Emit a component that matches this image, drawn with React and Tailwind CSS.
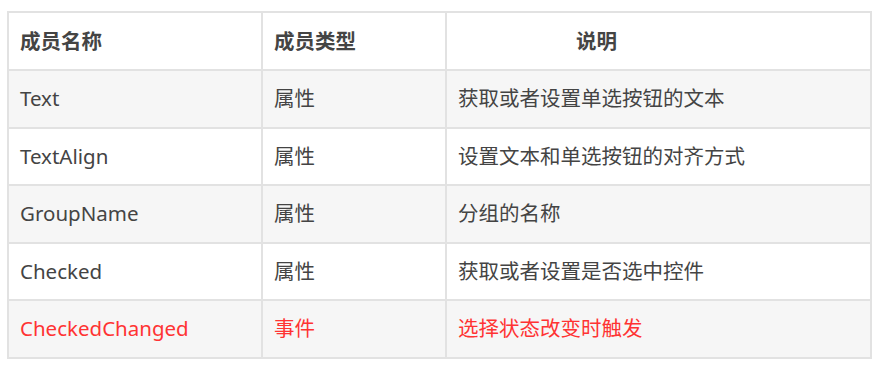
import React from 'react'

const rows = [
    { name: 'Text', type: '属性', desc: '获取或者设置单选按钮的文本' },
    { name: 'TextAlign', type: '属性', desc: '设置文本和单选按钮的对齐方式' },
    { name: 'GroupName', type: '属性', desc: '分组的名称' },
    { name: 'Checked', type: '属性', desc: '获取或者设置是否选中控件' },
    { name: 'CheckedChanged', type: '事件', desc: '选择状态改变时触发', red: true },
]

const App = () => {
    return (
        <div className="bg-white w-[877px] h-[369px] pt-[11px] pl-[7px] font-['Segoe_UI','Noto_Sans','Noto_Sans_CJK_SC',sans-serif]">
            <table className="border-collapse w-[863px] table-fixed text-[20.5px] text-[#444]">
                <colgroup>
                    <col className="w-[254px]" />
                    <col className="w-[184px]" />
                    <col className="w-[425px]" />
                </colgroup>
                <thead>
                    <tr className="h-[58px] bg-white">
                        <th className="border-2 border-[#e2e2e2] text-left font-bold pl-[11px]">成员名称</th>
                        <th className="border-2 border-[#e2e2e2] text-left font-bold pl-[11px]">成员类型</th>
                        <th className="border-2 border-[#e2e2e2] text-left font-bold pl-[129px]">说明</th>
                    </tr>
                </thead>
                <tbody>
                    {rows.map((r, i) => (
                        <tr key={r.name} className={`h-[57.5px] ${i % 2 === 0 ? 'bg-[#f6f6f6]' : 'bg-white'} ${r.red ? 'text-[#ff3333]' : ''}`}>
                            <td className="border-2 border-[#e2e2e2] pl-[11px]">{r.name}</td>
                            <td className="border-2 border-[#e2e2e2] pl-[11px]">{r.type}</td>
                            <td className="border-2 border-[#e2e2e2] pl-[11px]">{r.desc}</td>
                        </tr>
                    ))}
                </tbody>
            </table>
        </div>
    )
}

export default App
